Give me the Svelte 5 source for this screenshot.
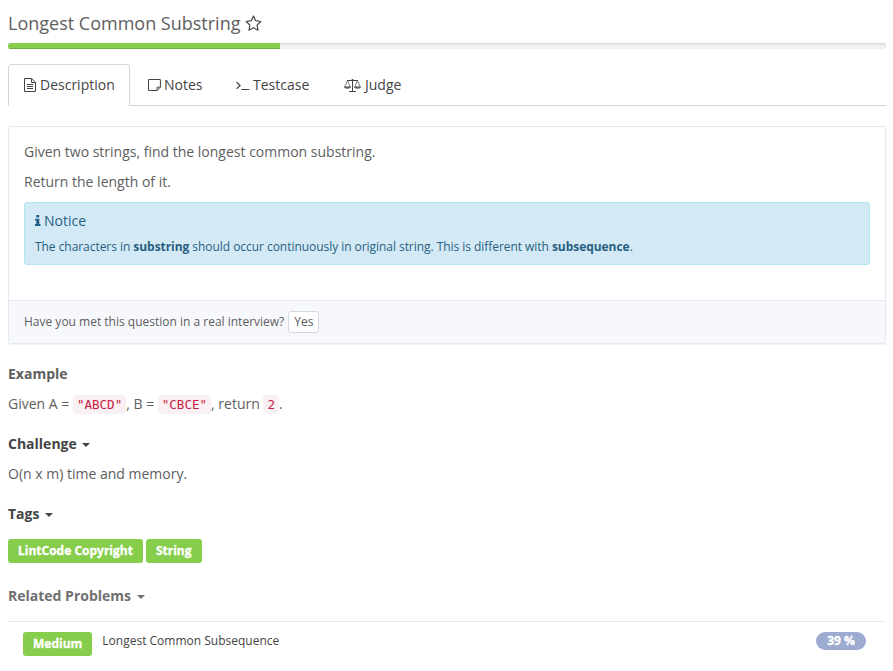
<script>
  let open = $state({ challenge: true, tags: true, related: true });
  const tags = ['LintCode Copyright', 'String'];
</script>

<main>
  <h1>
    <span>Longest Common Substring</span>
    <svg width="17" height="16" viewBox="0 0 17 16"><path d="M8.5 1.1l2.2 4.6 5.1.8-3.7 3.6.9 5.1-4.5-2.4L4 15.2l.9-5.1L1.2 6.5l5.1-.8z" fill="none" stroke="#444" stroke-width="1.2" stroke-linejoin="round" /></svg>
  </h1>
  <div class="progress"><div class="bar" style="width: 31%"></div></div>

  <nav>
    <a class="tab active" href="#description">
      <svg width="12" height="14" viewBox="0 0 12 14" fill="none" stroke="#444"><path d="M.5.5h7.2l3.8 3.8v9.2H.5zM7.5.5v4h4M3 6.5h6M3 8.5h6M3 10.5h6" /></svg>
      <span>Description</span>
    </a>
    <a class="tab notes" href="#notes">
      <svg width="13" height="14" viewBox="0 0 13 14" fill="none" stroke="#444"><path d="M.5 1.5h11.9v7.7l-3.3 3.3H.5zM12.4 9.2H9.1v3.3" /></svg>
      <span>Notes</span>
    </a>
    <a class="tab testcase" href="#testcase">
      <svg width="14" height="14" viewBox="0 0 14 14" fill="none" stroke="#444"><path d="M.6 4.2l3.5 3.3-3.5 3.3" stroke-width="1.2" /><path d="M5.3 11.5h8" /></svg>
      <span>Testcase</span>
    </a>
    <a class="tab judge" href="#judge">
      <svg width="17" height="15" viewBox="0 0 17 15" fill="none" stroke="#444"><path d="M3 2.5h11M8.5 1v12.5M5 13.5h7" /><path d="M3.5 2.5L.8 8.7M3.5 2.5l2.7 6.2M13.5 2.5l-2.7 6.2M13.5 2.5l2.7 6.2" stroke-width=".7" /><path d="M.2 8.8h6.6c-.4 2.2-6.2 2.2-6.6 0zM10.2 8.8h6.6c-.4 2.2-6.2 2.2-6.6 0z" fill="#666" stroke-width=".5" /><circle cx="8.5" cy="2" r="1" fill="#444" stroke="none" /></svg>
      <span>Judge</span>
    </a>
  </nav>

  <section class="panel">
    <div class="body">
      <p>Given two strings, find the longest common substring.</p>
      <p>Return the length of it.</p>
      <div class="notice">
        <div class="heading">
          <svg width="6" height="11" viewBox="0 0 6 11" fill="#236086"><path d="M1.3 0h2.9v2.4H1.3zM0 3.7h4.3v5.4h1.2V11H0V9.1h1.3V5.6H0z" /></svg>
          <span>Notice</span>
        </div>
        <div class="detail">The characters in <b>substring</b> should occur continuously in original string. This is different with <b>subsequence</b>.</div>
      </div>
    </div>
    <footer><span>Have you met this question in a real interview?</span><button>Yes</button></footer>
  </section>

  <h2 class="plain">Example</h2>
  <p class="line">Given A = <code>"ABCD"</code>, B = <code>"CBCE"</code>, return <code>2</code>.</p>

  <h2 onclick={() => (open.challenge = !open.challenge)} role="presentation">Challenge <i class="caret"></i></h2>
  {#if open.challenge}<p class="line">O(n x m) time and memory.</p>{/if}

  <h2 onclick={() => (open.tags = !open.tags)} role="presentation">Tags <i class="caret"></i></h2>
  {#if open.tags}
    <div class="tags">{#each tags as tag}<span class="label">{tag}</span>{/each}</div>
  {/if}

  <h2 class="related" onclick={() => (open.related = !open.related)} role="presentation">Related Problems <i class="caret"></i></h2>
  {#if open.related}
    <div class="problem">
      <span class="label medium">Medium</span>
      <a href="#subsequence">Longest Common Subsequence</a>
      <span class="badge">39 %</span>
    </div>
  {/if}
</main>

<style>
  :global(body) { background: #fff; overflow: hidden; }
  main { box-sizing: border-box; height: 671px; padding: 8px 7px 0 8px; overflow: hidden; font: 14px/20px "Open Sans", sans-serif; color: #5e5e5e; }
  svg { display: block; flex: none; }
  h1, h2, p { margin: 0; }
  h1 { display: flex; align-items: center; gap: 5px; height: 30px; font-size: 18px; font-weight: 400; line-height: 30px; }
  .progress { height: 6px; margin-top: 5px; overflow: hidden; border-radius: 3px; background: #f2f2f2; box-shadow: inset 0 1px 2px rgba(0, 0, 0, .15); }
  .bar { height: 6px; background: #86cd4b; box-shadow: inset 0 -1px 0 #6bae36; }
  nav { display: flex; height: 41px; margin-top: 15px; border-bottom: 1px solid #d6d6d6; }
  .tab { box-sizing: border-box; display: flex; align-items: center; height: 41px; gap: 4px; padding: 0 15px; border: 1px solid transparent; border-bottom: 0; color: #444; text-decoration: none; }
  .active { width: 122px; height: 42px; padding-bottom: 1px; border-color: #d6d6d6; border-radius: 4px 4px 0 0; background: #fff; }
  .notes { gap: 3px; padding: 0 0 0 17px; width: 88px; }
  .testcase { padding: 0 0 0 17px; width: 107px; gap: 3px; }
  .judge { padding-left: 18px; }
  .panel { box-sizing: border-box; height: 218px; margin-top: 20px; border: 1px solid #e6e9f1; border-radius: 2px; box-shadow: 0 1px 1px rgba(0, 0, 0, .05); }
  .body { box-sizing: border-box; height: 173px; padding: 15px 15px 0; }
  .body p { height: 30px; }
  .notice { box-sizing: border-box; height: 63px; padding: 8px 10px; border: 1px solid #b3e5ef; border-radius: 3px; background: #d3e9f6; color: #285f80; }
  .heading { display: flex; align-items: center; gap: 3px; height: 20px; }
  .heading svg { margin-top: -1px; }
  .detail { margin-top: 6px; font-size: 12px; letter-spacing: -.048px; }
  footer { box-sizing: border-box; display: flex; align-items: center; height: 43px; gap: 4px; padding: 0 15px; border-top: 1px solid #e6e9f1; background: #f7f8fc; font-size: 12px; }
  button { box-sizing: border-box; width: 31px; height: 22px; padding: 0; border: 1px solid #d5d9e2; border-radius: 3px; background: #fff; color: #5e5e5e; font: 12px/20px "Open Sans", sans-serif; }
  h2 { height: 20px; margin-top: 20px; font-size: 14px; font-weight: 700; line-height: 20px; color: #444; }
  h2.plain { color: #5e5e5e; }
  .line { height: 20px; margin-top: 10px; white-space: nowrap; }
  code { padding: 2px 4px; border-radius: 4px; background: #f9f0f3; font: 12.6px/14px "DejaVu Sans Mono", monospace; color: #c71c42; }
  .line code { letter-spacing: -.04px; }
  .caret { display: inline-block; margin-left: 2px; vertical-align: middle; border-top: 4px solid; border-left: 4px solid transparent; border-right: 4px solid transparent; }
  .tags { display: flex; gap: 3px; margin-top: 15px; }
  .label { box-sizing: border-box; height: 24px; padding: 0 10px; border-radius: 3px; background: #86cd4b; color: #fff; font-size: 12px; font-weight: 700; line-height: 24px; white-space: nowrap; -webkit-text-stroke: .3px #fff; }
  .related { margin-top: 23px; color: #707070; }
  .problem { display: flex; align-items: flex-start; height: 49px; margin-top: 15px; padding: 10px 20px 0 15px; border-top: 1px solid #e6e9f1; font-size: 12px; }
  .problem a { margin: -1px 0 0 10px; color: #444; text-decoration: none; }
  .badge { width: 50px; height: 18px; margin-left: auto; border-radius: 9px; background: #9dabd0; color: #fff; font-weight: 700; line-height: 18px; text-align: center; -webkit-text-stroke: .3px #fff; }
</style>
